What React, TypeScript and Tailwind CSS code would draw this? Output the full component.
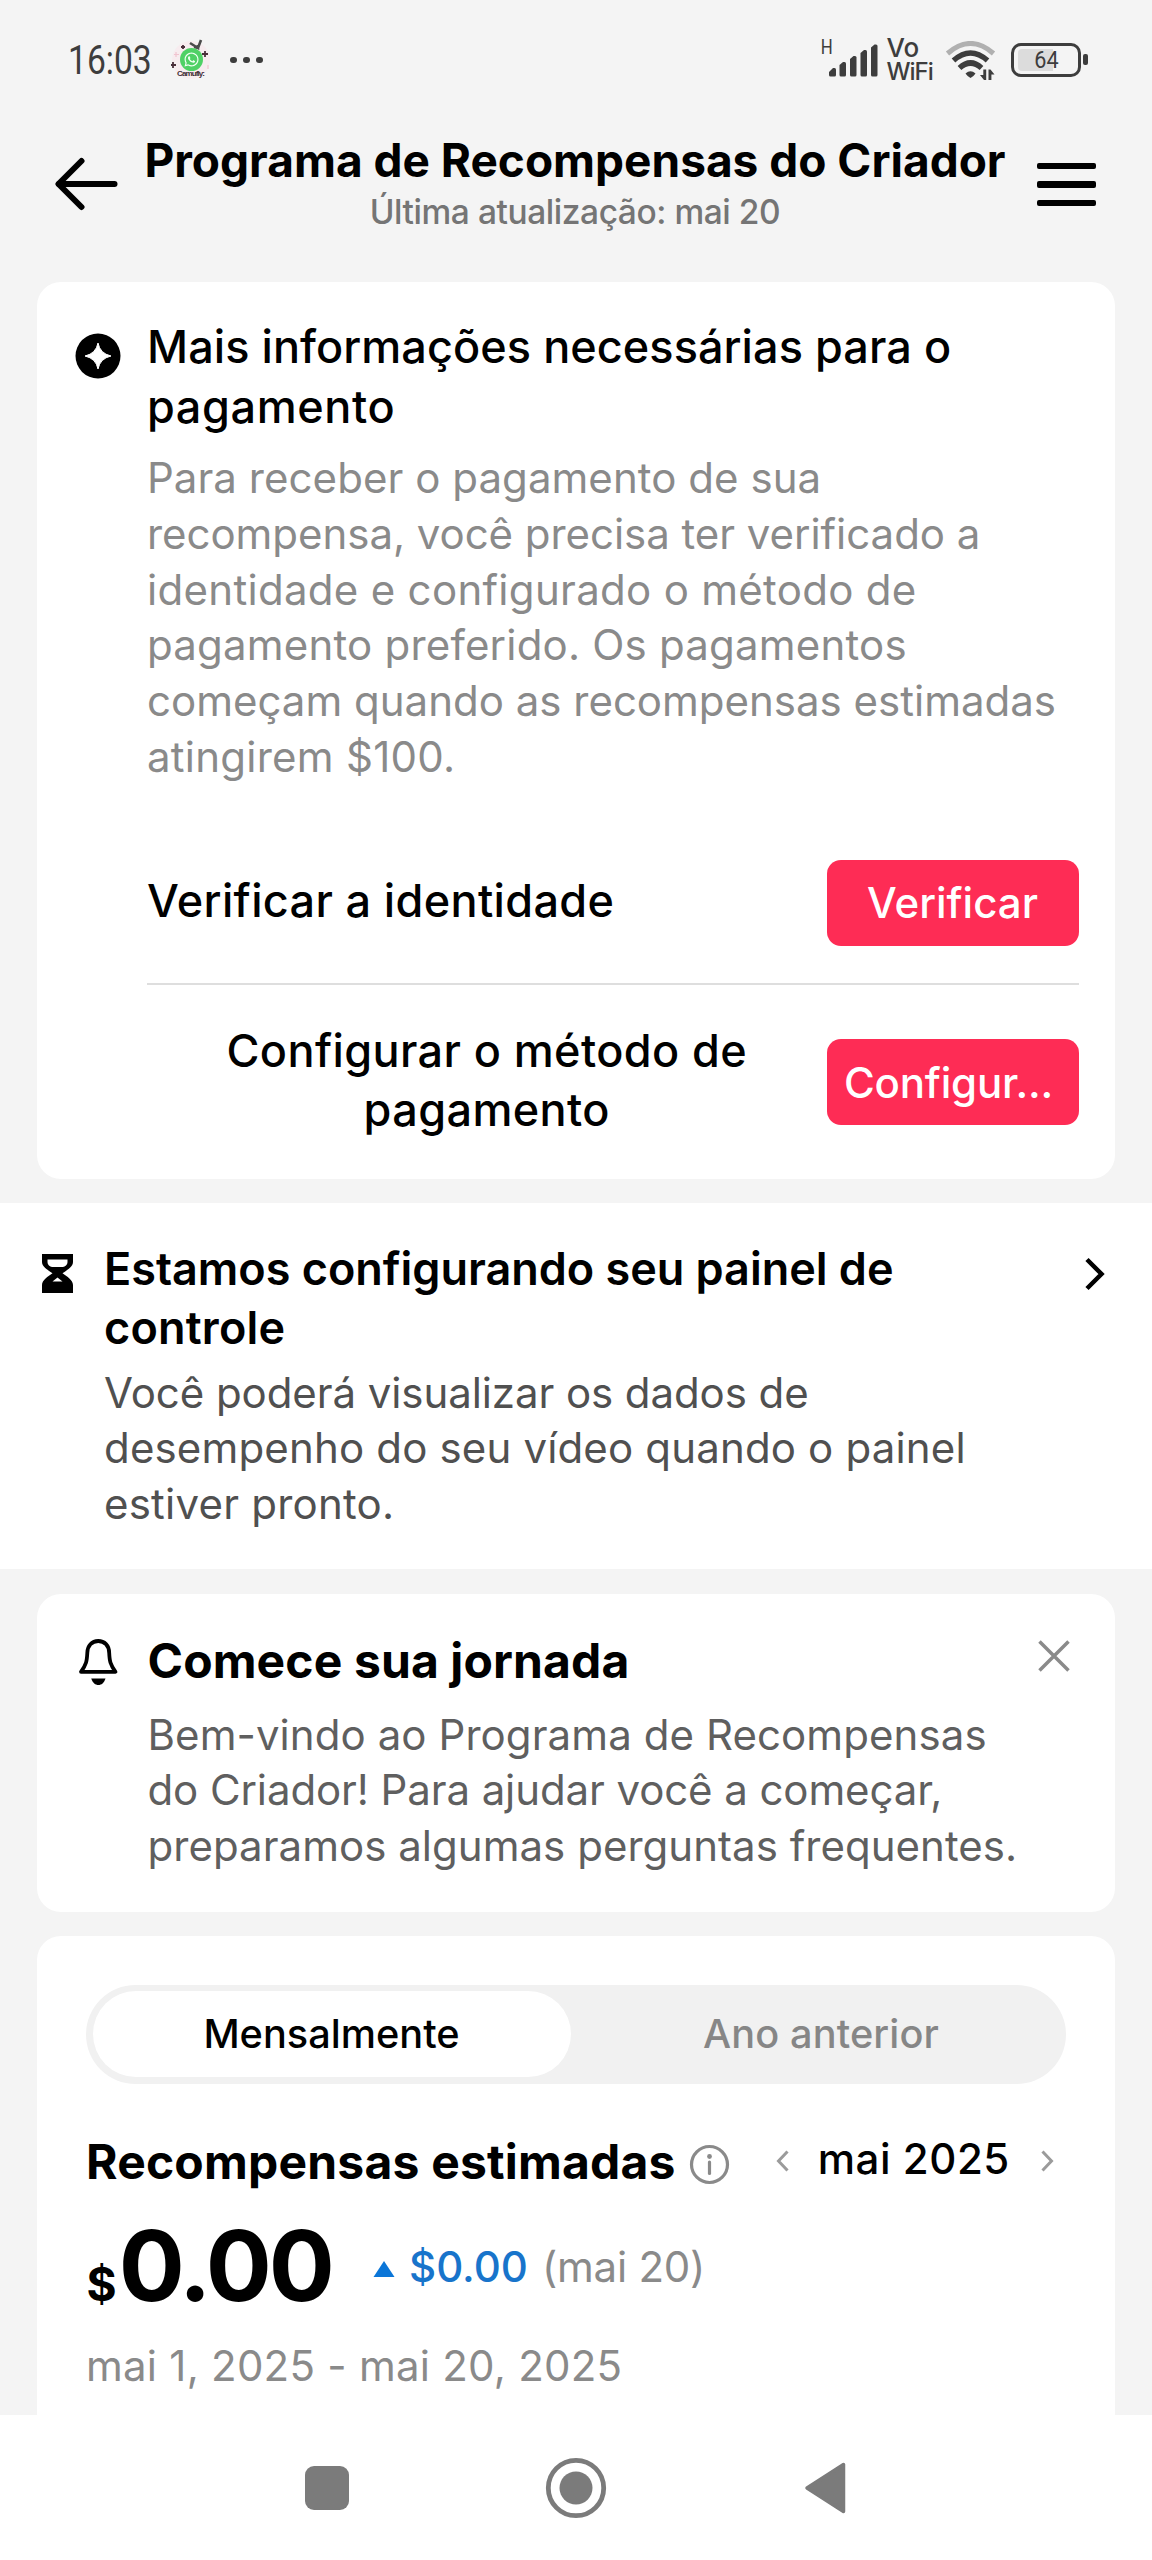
import React from "react";
import { FaWhatsapp } from "react-icons/fa";

function StatusBar() {
  return (
    <div className="flex h-[120px] items-start justify-between pt-[30px] pr-[64.500px] pl-[68px] text-[#3d3d3d]">
      <div className="flex h-[60px] items-center">
        <div className="w-[84px]">
          <span className="inline-block origin-left scale-x-[0.82] font-['Roboto',sans-serif] text-[41px] leading-[60px]">16:03</span>
        </div>
        <svg className="ml-[18px] h-[44px] w-[44px]" viewBox="0 0 44 44">
          <circle cx="21" cy="22" r="19" fill="#f7ecef" />
          <path d="M20 5l8 5v-3M24 9l4 1 3-8" fill="none" stroke="#4b4b4b" strokeWidth="2.600" />
          <path d="M35 13v6M32 16h6M3 24v6M1 27h5M13 7v4M11 9h4" stroke="#4a2f3a" strokeWidth="1.800" />
          <path d="M6 14v5M4 16.500h5M38 27v4" stroke="#f0c4cf" strokeWidth="1.200" />
          <circle cx="21.500" cy="21.500" r="11.500" fill="#4fd165" />
          <FaWhatsapp x="13.500" y="13.500" width="16" height="16" size={16} color="#f2fff4" />
          <text x="7" y="38" fontFamily="Liberation Sans" fontWeight="700" fontSize="8" fill="#3e2e36" textLength="28">Camufly:</text>
        </svg>
        <div className="ml-[16px] flex gap-[6.500px]">
          <i className="size-[6.500px] rounded-full bg-[#3d3d3d]" />
          <i className="size-[6.500px] rounded-full bg-[#3d3d3d]" />
          <i className="size-[6.500px] rounded-full bg-[#3d3d3d]" />
        </div>
      </div>

      <div className="flex h-[60px] items-start">
        <span className="mt-[9px] w-[8px] -translate-x-px scale-x-[0.8] font-['Roboto',sans-serif] text-[21px] leading-[17px]">H</span>
        <svg className="mt-[14px] h-[33px] w-[49px]" viewBox="0 0 49 33" fill="#3d3d3d">
          <path d="M0 31v-3l4-4h1.500q1.500 0 1.500 1.500V31q0 1.500-1.500 1.500h-4Q0 32.500 0 31z" />
          <path d="M10.500 31V21l3.500-3h1.500q1.500 0 1.500 1.500V31q0 1.500-1.500 1.500H12q-1.500 0-1.500-1.500z" />
          <path d="M21 31V15l3.500-3H26q1.500 0 1.500 1.500V31q0 1.500-1.500 1.500h-3.500Q21 32.500 21 31z" />
          <path d="M31.500 31V9L35 6h1.500Q38 6 38 7.500V31q0 1.500-1.500 1.500H33q-1.500 0-1.500-1.500z" />
          <path d="M42 31V3.500L45.500.5H47q1.500 0 1.500 1.500v29q0 1.500-1.500 1.500h-3.500Q42 32.500 42 31z" />
        </svg>
        <div className="mt-[6px] ml-[9px] flex w-[48px] flex-col whitespace-nowrap font-['Inter',sans-serif] text-[26px] font-medium leading-[23.500px]">
          <span>Vo</span>
          <span className="text-[24px] tracking-[-1px]">WiFi</span>
        </div>
        <svg className="mt-[11px] ml-[10px] h-[40px] w-[52px]" viewBox="0 0 52 40" fill="none">
          <path d="M2.500 12.500Q25.500-7.500 48.500 12.500" stroke="#b0b0b0" strokeWidth="5" />
          <path d="M8.500 19.500Q25.500 4.500 42.500 19.500" stroke="#3d3d3d" strokeWidth="5.500" />
          <path d="M14.500 27Q25.500 17 36.500 27" stroke="#3d3d3d" strokeWidth="5.500" />
          <path d="M20.500 32.500Q25.500 28 30.500 32.500Q29 35 25.500 37Q22 35 20.500 32.500z" fill="#3d3d3d" />
          <path d="M38.300 28.500H41.200V39H39L35 34H38.300ZM43.500 39V28.500H45.500L49.500 33.500H46.400V39Z" fill="#3d3d3d" />
        </svg>
        <div className="mt-[12.500px] ml-[14px] flex h-[34px] w-[70px] items-center rounded-[10px] border-[3.500px] border-[#3d3d3d] pl-[4px]">
          <div className="h-[22px] w-[35px] rounded-l-[4px] bg-[#dcdcdc]" />
          <span className="-ml-[20px] scale-x-[0.9] font-['Roboto',sans-serif] text-[24px] leading-[24px]">64</span>
        </div>
        <i className="mt-[24px] ml-[2.500px] h-[11px] w-[4.500px] rounded-[2px] bg-[#3d3d3d]" />
      </div>
    </div>
  );
}

function Header() {
  return (
    <header className="flex h-[162px] items-start justify-between pr-[56px] pl-[54px]">
      <svg className="mt-[37px] h-[54px] w-[64px]" viewBox="0 0 64 54" fill="none" stroke="#000" strokeWidth="6" strokeLinecap="round" strokeLinejoin="round">
        <path d="M27.500 4L4.500 27L27.500 50" />
        <path d="M5 27H60.500" />
      </svg>
      <div className="mr-[5px] flex flex-col items-center pt-[11px] whitespace-nowrap">
        <h1 className="text-[46px] leading-[59px] font-bold">Programa de Recompensas do Criador</h1>
        <p className="text-[33.500px] leading-[44px] font-medium tracking-[-0.440px] text-[#757575]">Última atualização: mai 20</p>
      </div>
      <div className="mt-[42.500px] flex w-[59px] flex-col gap-[12px]">
        <i className="h-[6.500px] rounded-[2px] bg-black" />
        <i className="h-[6.500px] rounded-[2px] bg-black" />
        <i className="h-[6.500px] rounded-[2px] bg-black" />
      </div>
    </header>
  );
}

function PaymentCard() {
  return (
    <section className="mx-[37px] h-[897px] rounded-[24px] bg-white pt-[35px] pr-[36.500px] pl-[38px]">
      <div className="flex gap-[26px]">
        <svg className="mt-[15.500px] size-[46px] shrink-0" viewBox="0 0 46 46">
          <circle cx="23" cy="23" r="22.500" fill="#000" />
          <path d="M23 10Q25 20.500 36 23Q25 25.500 23 36Q21 25.500 10 23Q21 20.500 23 10z" fill="#fff" stroke="#fff" strokeLinejoin="round" />
        </svg>
        <div className="whitespace-nowrap">
          <h2 className="text-[45px] leading-[59.500px] font-medium tracking-[0.070px]">
            Mais informações necessárias para o<br />
            <span className="tracking-[0.600px]">pagamento</span>
          </h2>
          <p className="mt-[14px] text-[42px] leading-[55.800px] text-[#8a8a8a]">
            <span className="tracking-[0.050px]">Para receber o pagamento de sua</span><br />
            <span className="tracking-[-0.040px]">recompensa, você precisa ter verificado a</span><br />
            <span className="tracking-[0.300px]">identidade e configurado o método de</span><br />
            <span className="tracking-[0.200px]">pagamento preferido. Os pagamentos</span><br />
            <span>começam quando as recompensas estimadas</span><br />
            <span className="tracking-[0.250px]">atingirem $100.</span>
          </p>
        </div>
      </div>
      <div className="mt-[75px] ml-[72px]">
        <div className="flex h-[86px] items-center justify-between">
          <span className="pb-[4px] text-[45px] leading-[59px] font-medium tracking-[0.350px]">Verificar a identidade</span>
          <button className="flex h-[86px] w-[252px] items-center justify-center rounded-[14px] bg-[#fe2c55] text-[42px] font-medium text-white">Verificar</button>
        </div>
        <div className="mt-[37px] h-[2.500px] bg-[#dedede]" />
        <div className="mt-[35.500px] flex h-[118px] items-center">
          <span className="flex-1 text-center text-[45px] leading-[59px] font-medium tracking-[0.400px]">
            Configurar o método de<br />pagamento
          </span>
          <button className="mt-[5px] flex h-[86px] w-[252px] items-center rounded-[14px] bg-[#fe2c55] pl-[17.500px] text-[42px] font-medium tracking-[-0.200px] text-white">Configur...</button>
        </div>
      </div>
    </section>
  );
}

function SetupBanner() {
  return (
    <section className="mt-[24px] flex h-[365.500px] bg-white pt-[35.500px] pl-[42px]">
      <svg className="mt-[15.500px] h-[39px] w-[31px] shrink-0" viewBox="0 0 31 39">
        <path fillRule="evenodd" d="M0 0H31V8C31 13 25 16 20.500 19.300C25 22.500 31 26 31 31V39H0V31C0 26 6 22.500 10.500 19.300C6 16 0 13 0 8ZM5.500 5.500H25.500V8C25.500 11 23 12.500 21 13H10C8 12.500 5.500 11 5.500 8ZM15.500 23.500L20.500 27.500H10.500Z" />
      </svg>
      <div className="ml-[31px] flex-1 whitespace-nowrap">
        <h2 className="text-[45px] leading-[59.300px] font-semibold tracking-[-0.020px]">
          Estamos configurando seu painel de<br />
          <span className="tracking-[0.200px]">controle</span>
        </h2>
        <p className="mt-[7.500px] text-[42px] leading-[55.800px] text-[#505050]">
          <span className="tracking-[-0.080px]">Você poderá visualizar os dados de</span><br />
          <span className="tracking-[0.160px]">desempenho do seu vídeo quando o painel</span><br />
          <span className="tracking-[0.220px]">estiver pronto.</span>
        </p>
      </div>
      <svg className="mt-[18px] mr-[46px] h-[34px] w-[22px]" viewBox="0 0 22 34" fill="none" stroke="#000" strokeWidth="4.500">
        <path d="M3 2.500L17.500 17L3 31.500" />
      </svg>
    </section>
  );
}

function WelcomeCard() {
  return (
    <section className="mx-[37px] mt-[25px] flex h-[318px] rounded-[24px] bg-white pt-[37px] pl-[41px]">
      <svg className="mt-[8px] h-[47px] w-[41px] shrink-0" viewBox="0 0 41 47">
        <path d="M9.300 14C9.300 6.500 14 2 20.200 2S31.200 6.500 31.200 14C31.600 22 32 25 37.500 32.800H3C8.500 25 8.900 22 9.300 14Z" fill="none" stroke="#000" strokeWidth="3.800" strokeLinejoin="round" />
        <path d="M13.200 39.500H27.500C26 44 23.500 46 20.400 46S14.800 44 13.200 39.500Z" />
      </svg>
      <div className="ml-[28.500px] flex-1 whitespace-nowrap">
        <h2 className="text-[48px] leading-[60px] font-bold tracking-[0.120px]">Comece sua jornada</h2>
        <p className="mt-[16px] text-[42px] leading-[55.800px] text-[#5f5f5f]">
          <span className="tracking-[0.080px]">Bem-vindo ao Programa de Recompensas</span><br />
          <span className="tracking-[-0.100px]">do Criador! Para ajudar você a começar,</span><br />
          <span className="tracking-[0.030px]">preparamos algumas perguntas frequentes.</span>
        </p>
      </div>
      <svg className="mt-[8px] mr-[44px] size-[34px]" viewBox="0 0 34 34" stroke="#8a8a8a" strokeWidth="3.500">
        <path d="M2.500 2.500L31.500 31.500M31.500 2.500L2.500 31.500" />
      </svg>
    </section>
  );
}

function RewardsCard() {
  return (
    <section className="mx-[37px] mt-[24px] h-[520px] rounded-t-[24px] bg-white pt-[49.500px] pr-[49px] pl-[49px]">
      <div className="flex h-[98.500px] items-center rounded-full bg-[#f1f1f1] p-[6.500px] text-[39.700px] font-medium">
        <div className="flex h-[86px] w-[478px] items-center justify-center rounded-full bg-white pt-[2px]">Mensalmente</div>
        <div className="flex flex-1 items-center justify-center pt-[2px] pl-[12px] tracking-[0.120px] text-[#868686]">Ano anterior</div>
      </div>
      <div className="mt-[48px] flex h-[60px] items-start whitespace-nowrap">
        <h2 className="text-[48px] leading-[60px] font-bold tracking-[0.200px]">Recompensas estimadas</h2>
        <svg className="mt-[12.500px] ml-[13px] size-[41px]" viewBox="0 0 41 41" fill="none" stroke="#8a8a8a">
          <circle cx="20.500" cy="20.500" r="18" strokeWidth="3.200" />
          <path d="M20.500 18V29.500" strokeWidth="3.200" strokeLinecap="round" />
          <circle cx="20.500" cy="12.500" r="2.400" fill="#8a8a8a" stroke="none" />
        </svg>
        <svg className="mt-[17px] ml-[45.500px] h-[24px] w-[16px]" viewBox="0 0 16 24" fill="none" stroke="#9b9b9b" strokeWidth="3">
          <path d="M12.500 2.500L3.500 12L12.500 21.500" />
        </svg>
        <span className="mt-[-1px] ml-[26.500px] text-[42px] leading-[56px] font-medium tracking-[0.550px]">mai 2025</span>
        <svg className="mt-[17px] ml-[29px] h-[24px] w-[16px]" viewBox="0 0 16 24" fill="none" stroke="#9b9b9b" strokeWidth="3">
          <path d="M3.500 2.500L12.500 12L3.500 21.500" />
        </svg>
      </div>
      <div className="mt-[24.500px] flex h-[100px] items-start whitespace-nowrap">
        <div className="flex w-[288px] items-baseline pl-[0.500px] font-bold leading-[100px]">
          <span className="text-[46px]">$</span>
          <span className="ml-[2px] text-[98px] tracking-[-3px]">0.00</span>
        </div>
        <svg className="mt-[44.500px] -ml-px h-[16px] w-[22px]" viewBox="0 0 22 16"><path d="M11 0L21.500 16H.5z" fill="#0b76d8" /></svg>
        <span className="mt-[22.500px] ml-[14px] text-[42px] leading-[56px] font-medium text-[#1874cb]">$0.00</span>
        <span className="mt-[22.500px] ml-[14px] text-[42px] leading-[56px] tracking-[-0.250px] text-[#8a8a8a]">(mai 20)</span>
      </div>
      <p className="mt-[22px] text-[42px] leading-[56px] whitespace-nowrap tracking-[0.240px] text-[#8a8a8a]">mai 1, 2025 - mai 20, 2025</p>
    </section>
  );
}

function NavigationBar() {
  return (
    <nav className="flex h-[145px] items-start justify-center bg-white pt-[42px] pr-[1.500px] text-[#7b7b7b]">
      <i className="mt-[8.500px] size-[44px] rounded-[9px] bg-[#7b7b7b]" />
      <svg className="ml-[196.500px] size-[62px]" viewBox="0 0 62 62">
        <circle cx="31" cy="31" r="27.700" fill="none" stroke="currentColor" strokeWidth="4.800" />
        <circle cx="31" cy="31" r="16.500" fill="currentColor" />
      </svg>
      <svg className="mt-[4px] ml-[197px] h-[54px] w-[42px]" viewBox="0 0 42 54">
        <path d="M39.500 3.500V50.500L3 27z" fill="currentColor" stroke="currentColor" strokeWidth="3.500" strokeLinejoin="round" />
      </svg>
    </nav>
  );
}

export default function App() {
  return (
    <div className="flex h-[2560px] w-[1152px] flex-col overflow-hidden bg-[#f4f4f4] font-['Inter',sans-serif] text-black">
      <main className="h-[2415px] shrink-0 overflow-hidden">
        <StatusBar />
        <Header />
        <PaymentCard />
        <SetupBanner />
        <WelcomeCard />
        <RewardsCard />
      </main>
      <NavigationBar />
    </div>
  );
}
